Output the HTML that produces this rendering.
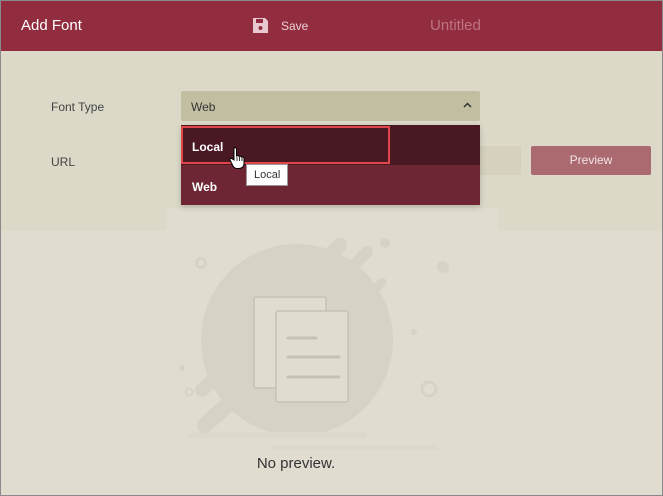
<!DOCTYPE html>
<html><head><style>
*{margin:0;padding:0;box-sizing:border-box}
body{width:663px;height:496px;overflow:hidden;font-family:"Liberation Sans",sans-serif;background:#e0ddd0;position:relative}
.frame{position:absolute;inset:0;border:1px solid #8a8a8a;pointer-events:none;z-index:20}
.hdr{position:absolute;left:0;top:0;width:663px;height:51px;background:#922d40}
.abs{position:absolute}
</style></head><body>
<div class="hdr">
 <div class="abs" style="left:21px;top:17px;color:#fff;font-size:15px">Add Font</div>
 <svg class="abs" style="left:252px;top:17px" width="17" height="17" viewBox="0 0 17 17"><path d="M1 1h12l3 3v12H1z" fill="#e8c9cf"/><rect x="4" y="2" width="7" height="4" fill="#922d40"/><circle cx="8.5" cy="11" r="2" fill="#922d40"/></svg>
 <div class="abs" style="left:281px;top:19px;color:#ead0d4;font-size:12px">Save</div>
 <div class="abs" style="left:430px;top:17px;color:#bf7483;font-size:15px">Untitled</div>
</div>
<div class="abs" style="left:0;top:51px;width:663px;height:180px;background:#dcd9c8"></div>
<div class="abs" style="left:167px;top:208px;width:331px;height:30px;background:#e0ddd0"></div>
<div class="abs" style="left:51px;top:100px;font-size:12px;color:#444">Font Type</div>
<div class="abs" style="left:51px;top:155px;font-size:12px;color:#444">URL</div>
<div class="abs" style="left:181px;top:91px;width:299px;height:30px;background:#c2bea2;border-radius:2px;font-size:12px;color:#333;padding:9px 0 0 10px">Web
 <svg class="abs" style="left:282px;top:11px" width="9" height="6" viewBox="0 0 9 6"><path d="M1 5L4.5 1.5 8 5" stroke="#333" stroke-width="1.5" fill="none"/></svg></div>
<div class="abs" style="left:181px;top:146px;width:340px;height:29px;background:#d5d1be;border-radius:2px"></div>
<div class="abs" style="left:531px;top:146px;width:120px;height:29px;background:#aa6a70;border-radius:2px;color:#f3e5e6;font-size:12px;text-align:center;line-height:29px">Preview</div>
<div class="abs" style="left:181px;top:125px;width:299px;height:80px;box-shadow:0 2px 6px rgba(0,0,0,.2)">
 <div style="height:40px;background:#4a1822"></div>
 <div style="height:40px;background:#6e2634"></div>
</div>
<div class="abs" style="left:181px;top:126px;width:209px;height:38px;border:2px solid #e0454a"></div>
<div class="abs" style="left:192px;top:140px;color:#fff;font-size:12px;font-weight:bold">Local</div>
<div class="abs" style="left:192px;top:180px;color:#fff;font-size:12px;font-weight:bold">Web</div>
<div class="abs" style="left:246px;top:164px;width:42px;height:22px;background:#fff;border:1px solid #999;font-size:11px;color:#333;padding:4px 0 0 7px">Local</div>
<svg class="abs" style="left:229px;top:146px" width="20" height="24" viewBox="0 0 20 24"><path d="M5 2c1-1 2.5 0 2.5 1v7l1-.5c1 0 1.5.5 1.5 1l1-.3c1 0 1.5.5 1.5 1l1-.2c1 0 1.5.6 1.5 1.5v5c0 3-2 5-5 5h-2c-2 0-3-1-4-2.5L1 14c-.5-1 .5-2 1.5-1.5L5 14V3z" fill="#fff" stroke="#000" stroke-width="1"/><path d="M8 11v4M10.5 11v4M13 12v3" stroke="#000" stroke-width=".8"/></svg>
<svg class="abs" style="left:160px;top:220px" width="320" height="240" viewBox="0 0 320 240">
 <circle cx="137" cy="120" r="96" fill="#d6d3c6"/>
 <rect x="0" y="212" width="320" height="30" fill="#e0ddd0"/>
 <g stroke="#d6d3c6" stroke-linecap="round" fill="none">
  <path d="M180 25L172 33" stroke-width="14"/><path d="M207 32L186 53" stroke-width="12"/><path d="M222 62L205 79" stroke-width="9"/>
  <path d="M60 153L42 170" stroke-width="14"/><path d="M75 178L45 205" stroke-width="16"/>
 </g>
 <circle cx="225" cy="23" r="5" fill="#d6d3c6"/><circle cx="283" cy="47" r="6" fill="#d6d3c6"/><circle cx="254" cy="112" r="3" fill="#d6d3c6"/><circle cx="22" cy="148" r="3" fill="#d6d3c6"/>
 <circle cx="41" cy="43" r="4.5" fill="none" stroke="#d6d3c6" stroke-width="3"/><circle cx="29" cy="172" r="3.5" fill="none" stroke="#d6d3c6" stroke-width="2"/><circle cx="269" cy="169" r="7" fill="none" stroke="#d6d3c6" stroke-width="3"/>
 <rect x="94" y="77" width="72" height="91" rx="2" fill="#e0ddd0" stroke="#c5c2b5" stroke-width="1.5"/>
 <rect x="116" y="91" width="72" height="91" rx="2" fill="#e0ddd0" stroke="#c5c2b5" stroke-width="1.5"/>
 <g stroke="#c5c2b5" stroke-width="3" stroke-linecap="round"><path d="M128 118h28M128 137h51M128 157h51"/></g>
 <rect x="27" y="213" width="180" height="5" rx="2" fill="#dcd9cc"/>
 <rect x="112" y="225" width="166" height="5" rx="2" fill="#dcd9cc"/>
</svg>
<div class="abs" style="left:0;width:592px;top:455px;text-align:center;font-size:15px;color:#333">No preview.</div>
<div class="frame"></div>
</body></html>
